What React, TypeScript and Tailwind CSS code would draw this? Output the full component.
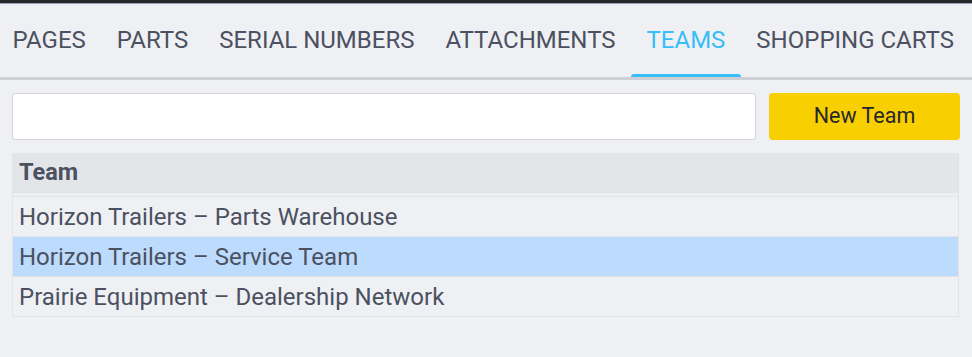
import React from "react";

const tabs = ["PAGES", "PARTS", "SERIAL NUMBERS", "ATTACHMENTS", "TEAMS", "SHOPPING CARTS"];
const rows = [
  { name: "Horizon Trailers – Parts Warehouse", sel: false },
  { name: "Horizon Trailers – Service Team", sel: true },
  { name: "Prairie Equipment – Dealership Network", sel: false },
];

export default function App() {
  return (
    <div
      className="w-[972px] h-[357px] bg-[#eff0f4] overflow-hidden"
      style={{ fontFamily: "Roboto, 'Liberation Sans', sans-serif" }}
    >
      <div className="h-[4px] bg-[#27282d] border-b border-[#9aa3b5]" />
      <div className="border-b-[3px] border-[#cfd0d6]">
        <div className="flex h-[73px] ml-[-3px]">
          {tabs.map((t) => {
            const active = t === "TEAMS";
            return (
              <div
                key={t}
                className={`relative flex items-center px-[15.5px] pb-[1px] text-[24px] ${
                  active ? "text-[#38bdf8]" : "text-[#4b5160]"
                }`}
              >
                {t}
                {active && (
                  <div className="absolute left-0 right-0 bottom-0 h-[3px] rounded-t-[3px] bg-[#38bdf8]" />
                )}
              </div>
            );
          })}
        </div>
      </div>
      <div className="px-[12px] pt-[13px]">
        <div className="flex gap-[13px]">
          <input className="flex-1 h-[47px] bg-white border border-[#d4d4d8] rounded-[3px] outline-none" />
          <button className="w-[191px] h-[47px] rounded-[4px] bg-[#f8cf00] text-[21.5px] text-[#27272a]">
            New Team
          </button>
        </div>
        <div className="mt-[13px] w-[947px] border border-[#e2e3e7] border-t-0">
          <div className="h-[43px] bg-[#e4e5e9] flex items-center px-[6px] text-[23.5px] font-bold text-[#4b5160] border-b-[3px] border-[#eceef1]">
            Team
          </div>
          {rows.map((r) => (
            <div
              key={r.name}
              className={`h-[40px] flex items-center px-[6px] text-[24px] text-[#4b5160] border-t border-[#e2e3e7] ${
                r.sel ? "bg-[#bddbfd]" : "bg-[#eff0f4]"
              }`}
            >
              {r.name}
            </div>
          ))}
        </div>
      </div>
    </div>
  );
}
